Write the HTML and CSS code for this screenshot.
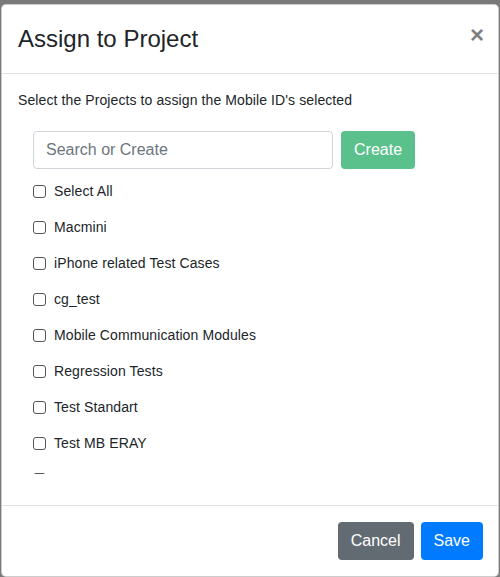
FILE: index.html
```html
<!DOCTYPE html>
<html lang="en">
<head>
  <meta charset="UTF-8">
  <meta name="viewport" content="width=device-width, initial-scale=1.0">
  <title>Assign to Project</title>
  <link rel="stylesheet" href="styles.css">
</head>

<body>
  <div class="modal">
    <!-- Header -->
    <div class="modal-header">
      <h4 class="modal-title">Assign to Project</h4>
      <button type="button" class="close" aria-label="Close">&times;</button>
    </div>

    <!-- Body -->
    <div class="modal-body">
      <p class="intro">Select the Projects to assign the Mobile ID's selected</p>
      <div class="picker">
        <div class="search-row">
          <input type="text" class="search" placeholder="Search or Create">
          <button type="button" class="btn btn-create">Create</button>
        </div>
        <div class="project-list">
          <label class="row"><input type="checkbox"> Select All</label>
          <label class="row"><input type="checkbox"> Macmini</label>
          <label class="row"><input type="checkbox"> iPhone related Test Cases</label>
          <label class="row"><input type="checkbox"> cg_test</label>
          <label class="row"><input type="checkbox"> Mobile Communication Modules</label>
          <label class="row"><input type="checkbox"> Regression Tests</label>
          <label class="row"><input type="checkbox"> Test Standart</label>
          <label class="row"><input type="checkbox"> Test MB ERAY</label>
          <label class="row"><input type="checkbox"></label>
        </div>
      </div>
    </div>

    <!-- Footer -->
    <div class="modal-footer">
      <button type="button" class="btn btn-cancel">Cancel</button>
      <button type="button" class="btn btn-save">Save</button>
    </div>
  </div>
</body>
</html>
```

FILE: styles.css
```css
* { box-sizing: border-box; }
body {
  margin: 0;
  padding: 4px 1px 0;
  background: #7a7a7a;
  font-family: 'Liberation Sans', Arial, sans-serif;
  color: #212529;
}
.modal {
  width: 498px;
  height: 573px;
  background: #fff;
  border: 1px solid rgba(0, 0, 0, .2);
  border-radius: 5px;
  display: flex;
  flex-direction: column;
  overflow: hidden;
}
.modal-header {
  display: flex;
  align-items: flex-start;
  padding: 16px;
  border-bottom: 1px solid #dee2e6;
}
.modal-title {
  margin: 0;
  font-size: 24px;
  line-height: 36px;
  font-weight: 400;
}
.close {
  margin: -16px -16px -16px auto;
  padding: 15px 14px 16px;
  background: none;
  border: none;
  font-family: inherit;
  font-size: 24px;
  line-height: 30px;
  font-weight: 700;
  color: #000;
  opacity: .5;
  cursor: pointer;
}
.modal-body {
  flex: 1;
  padding: 16px;
  display: flex;
  flex-direction: column;
  overflow: hidden;
}
.intro {
  margin: 0;
  font-size: 14px;
  letter-spacing: .1px;
  line-height: 20px;
}
.picker {
  margin: 21px 0 0 15px;
}
.search-row {
  display: flex;
  gap: 8px;
}
.search {
  width: 300px;
  height: 38px;
  padding: 6px 12px;
  border: 1px solid #ced4da;
  border-radius: 4px;
  font-family: inherit;
  font-size: 16px;
  color: #495057;
  outline: none;
}
.search::placeholder { color: #6c757d; }
.btn {
  height: 38px;
  padding: 6px 13px;
  border: none;
  border-radius: 4px;
  font-family: inherit;
  font-size: 16px;
  line-height: 24px;
  color: #fff;
  cursor: pointer;
}
.btn-create { background: #5bc18c; }
.btn-cancel { background: #636b72; margin-right: 3px !important; }
.btn-save { background: #007bff; }
.project-list {
  margin-top: 4px;
  height: 301px;
  overflow: hidden;
}
.row {
  display: flex;
  align-items: center;
  gap: 8px;
  height: 36px;
  font-size: 14px;
  letter-spacing: .1px;
}
.row input {
  appearance: none;
  -webkit-appearance: none;
  margin: 0;
  width: 13px;
  height: 13px;
  border: 1px solid #555;
  border-radius: 3px;
  background: #fff;
}
.modal-footer {
  display: flex;
  justify-content: flex-end;
  padding: 12px 11px 12px 12px;
  border-top: 1px solid #dee2e6;
}
.modal-footer .btn { margin: 4px; }
```
